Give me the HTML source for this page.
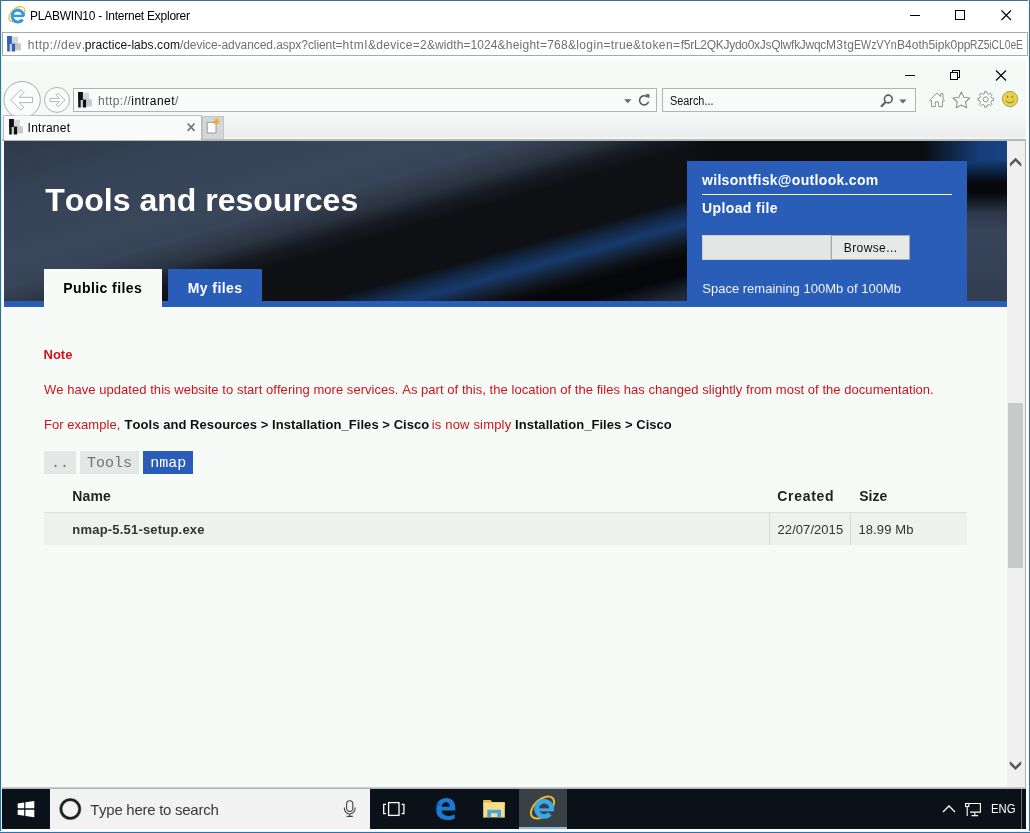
<!DOCTYPE html>
<html><head><meta charset="utf-8"><title>PLABWIN10 - Internet Explorer</title>
<style>
*{box-sizing:border-box;margin:0;padding:0}
html,body{width:1030px;height:833px;overflow:hidden;background:#fff}
body{position:relative;will-change:transform;font-kerning:none;font-family:"Liberation Sans",sans-serif;color:#000}
.abs{position:absolute}
svg{position:absolute;overflow:visible}
.ui{font-family:"Liberation Sans",sans-serif;font-size:12px;white-space:nowrap;line-height:15px}
/* outer window frame */
#bl{left:0;top:0;width:1px;height:833px;background:#2f7399}
#bl2{left:1px;top:0;width:1px;height:833px;background:#dcf1f8}
#bt{left:0;top:0;width:1030px;height:1px;background:#3d7394}
#br{left:1028px;top:0;width:2px;height:833px;background:linear-gradient(90deg,#e4f8fe 0,#e4f8fe 0.9px,#4a6d84 1.1px,#4a6d84 2px)}
#bb{left:0;top:831px;width:1030px;height:2px;background:linear-gradient(180deg,#e4f6fc 0,#e4f6fc 0.8px,#2d72a8 1px,#2d72a8 2px)}
#title{left:30px;top:9.1px;letter-spacing:-0.24px;color:#000}
#addr1{left:2px;top:32px;width:1025.6px;height:24px;border:1px solid #a6aaa8;background:#fff}
.u{top:37.7px;color:#707070}
/* remote desktop */
#ie{left:2px;top:60px;width:1024px;height:81px;background:linear-gradient(180deg,#fff 0,#f6faf7 1.5px)}
#navaddr{left:73px;top:88px;width:584px;height:24px;border:1px solid #b0b4b2;background:#f8fbf9}
#search{left:662px;top:88px;width:254px;height:24px;border:1px solid #b0b4b2;background:#f8fbf9}
#tabrow{left:2px;top:115px;width:1024px;height:26px;background:linear-gradient(180deg,#f5f8f6 0,#eaedeb 22px,#f6f8f7 23px,#f6f8f7 24px,#b4b8b6 24.5px,#b4b8b6 26px)}
#tab{left:2.5px;top:115px;width:199px;height:24.5px;background:#f8fbf9;border:1px solid #b9bdbb;border-bottom:none}
#newtab{left:201.5px;top:116px;width:22px;height:23px;background:#d4d7d5;border:1px solid #c3c6c4;border-bottom:none}
#page{left:4px;top:141px;width:1003px;height:647px;background:#f7fbf8;overflow:hidden}
#sb{left:1007px;top:141px;width:18px;height:647px;background:#f0f0f0}
#sbthumb{left:1008px;top:402.5px;width:15px;height:165px;background:#c6cac8}
#sbr{left:1024.8px;top:139.5px;width:1.2px;height:649px;background:#aeb1af}
#wb{left:2px;top:787.3px;width:1024px;height:1.8px;background:linear-gradient(180deg,#d0d3d1,#a9acaa)}
#taskbar{left:2px;top:789px;width:1024px;height:39.5px;background:#0a1118}

#banner{left:0;top:0;width:1003px;height:159.5px;background:linear-gradient(164.5deg,rgba(20,58,110,0) 56.5%,rgba(22,58,108,.6) 59.5%,rgba(22,58,108,1) 62.2%,rgba(24,48,84,.7) 64.5%,rgba(9,11,14,0) 67.5%,rgba(5,7,10,1) 69.5%,rgba(5,7,10,1) 73.5%,#1e2836 78%,#2a3446 83%,#323e52 100%),linear-gradient(164deg,#2f3a4b 0,#364256 14%,#3a465a 27%,#384457 33%,#2a3341 38.5%,#171b22 42%,#0e1013 45.5%,#0d0f12 100%)}
#bluebar{left:0;top:159.5px;width:1003px;height:6.2px;background:#2a5db8}
#bstrip{left:683px;top:0;width:320px;height:20px;background:linear-gradient(90deg,rgba(10,12,16,0) 0,#0a0c10 40px,#0a0c10 235px,#163f7a 295px,#164280 320px)}
#rstrip{left:962px;top:20px;width:41px;height:139.5px;background:linear-gradient(180deg,#133c74 0,#0c2344 10px,#06080b 22px,#06080b 32px,#2c3749 52px,#38445a 70px,#333e52 139px)}
#panel{left:683.3px;top:19.8px;width:279.4px;height:146px;background:#2a5db8;color:#fff}
.tabp{top:128px;height:38px;font-weight:bold;font-size:14px;line-height:14px;text-align:center;padding-top:11.5px;letter-spacing:0.42px}
#t1{left:39.5px;width:118.5px;background:#f7fbf8;color:#000}
#t2{left:164.2px;width:93.8px;height:31.5px;background:#2a5db8;color:#fff}
#h1{left:41.2px;top:42.6px;font-size:32px;line-height:32px;font-weight:bold;color:#fff;white-space:nowrap}
.red{color:#cd141b}
.p{left:40px;font-size:13px;line-height:13px;white-space:nowrap}
.p b{color:#111}
.bc{top:310px;height:23px;font-family:"Liberation Mono",monospace;font-size:15px;line-height:15px;padding:4.5px 7px 0;background:#e3e7e5;color:#747474;white-space:nowrap}
.th{top:348.4px;font-size:14px;line-height:14px;font-weight:bold;color:#222;white-space:nowrap}
#row{left:40px;top:371.2px;width:922.7px;height:32.8px;background:#eef2ee;border-top:1px solid #dde0de}
.td{top:381.7px;font-size:13px;line-height:13px;color:#333;white-space:nowrap}
.vl{top:372px;width:1px;height:32px;background:#d6d9d7}
</style></head><body>
<div id="ie" class="abs"></div>
<div id="bl" class="abs"></div><div id="bl2" class="abs"></div><div id="bt" class="abs"></div><div id="br" class="abs"></div><div id="bb" class="abs"></div>
<div id="title" class="abs ui">PLABWIN10 - Internet Explorer</div>
<div id="addr1" class="abs"></div>
<span class="abs ui u" style="left:27.8px;letter-spacing:0.462px">http://dev.</span><span class="abs ui u" style="left:84.7px;letter-spacing:0.075px;color:#111">practice-labs.com</span><span class="abs ui u" style="left:180px;letter-spacing:-0.07px">/device-advanced.aspx?client=</span><span class="abs ui u" style="left:342.4px;letter-spacing:0.707px">html</span><span class="abs ui u" style="left:367.9px;letter-spacing:0.303px">&amp;device=2</span><span class="abs ui u" style="left:427px;letter-spacing:0.07px">&amp;width=1024</span><span class="abs ui u" style="left:497.5px;letter-spacing:0.242px">&amp;height=768</span><span class="abs ui u" style="left:567.9px;letter-spacing:0.368px">&amp;login=true</span><span class="abs ui u" style="left:633px;letter-spacing:0.46px">&amp;token=</span><span class="abs ui u" style="left:680.8px;letter-spacing:-0.282px">f5rL2QKJydo0xJsQlwfkJwqc</span><span class="abs ui u" style="left:825.9px;letter-spacing:0.47px">M3tg</span><span class="abs ui u" style="left:854.3px;transform:scaleX(.889);transform-origin:0 0">EWzVYn</span><span class="abs ui u" style="left:897px;letter-spacing:0.008px">B4oth5ipk0pp</span><span class="abs ui u" style="left:969.9px;transform:scaleX(.853);transform-origin:0 0">RZ5iCL0eE</span>


<div id="tabrow" class="abs"></div>
<div id="navaddr" class="abs"></div>
<div id="search" class="abs"></div>
<div id="tab" class="abs"></div>
<div id="newtab" class="abs"></div>
<div id="page" class="abs">
<div id="banner" class="abs"></div>
<div id="bstrip" class="abs"></div><div id="rstrip" class="abs"></div>
<div id="bluebar" class="abs"></div>
<div id="h1" class="abs">Tools and resources</div>
<div id="t1" class="abs tabp">Public files</div>
<div id="t2" class="abs tabp">My files</div>
<div id="panel" class="abs">
 <div class="abs" style="left:14.7px;top:12.5px;font-size:14px;line-height:14px;font-weight:bold;letter-spacing:0.32px;white-space:nowrap">wilsontfisk@outlook.com</div>
 <div class="abs" style="left:15px;top:32.8px;width:249.5px;height:1px;background:#f2f5fb"></div>
 <div class="abs" style="left:14.7px;top:40.2px;font-size:14px;line-height:14px;font-weight:bold;letter-spacing:0.4px;white-space:nowrap">Upload file</div>
 <div class="abs" style="left:14.5px;top:74.3px;width:129.5px;height:25px;background:#e3e6e4;border:1px solid #cfd2d0"></div>
 <div class="abs" style="left:143.6px;top:74.3px;width:79.4px;height:25px;background:#e6e9e7;border:1px solid #a7aaa8;color:#111;font-size:12px;line-height:12px;padding-top:6.2px;text-align:center;letter-spacing:0.4px">Browse...</div>
 <div class="abs" style="left:15px;top:121.3px;font-size:13px;line-height:13px;color:#eef2fa;letter-spacing:0px;white-space:nowrap">Space remaining 100Mb of 100Mb</div>
</div>
<div class="abs p red" style="top:206.9px;left:39.5px;font-weight:bold">Note</div>
<div class="abs p red" style="top:242px;letter-spacing:0.043px">We have updated this website to start offering more services. As part of this, the location of the files has changed slightly from most of the documentation.</div>
<div class="abs p red" style="top:276.9px;left:39.9px;letter-spacing:0.05px">For example,</div>
<div class="abs p" style="top:276.9px;left:120.5px;font-weight:bold;color:#111;letter-spacing:0.06px">Tools and Resources &gt; Installation_Files &gt; Cisco</div>
<div class="abs p red" style="top:276.9px;left:427.8px;letter-spacing:0.17px">is now simply</div>
<div class="abs p" style="top:276.9px;left:511.1px;font-weight:bold;color:#111;letter-spacing:0.04px">Installation_Files &gt; Cisco</div>
<div class="abs bc" style="left:40px;width:32px">..</div>
<div class="abs bc" style="left:76px;width:59px">Tools</div>
<div class="abs bc" style="left:139.2px;width:50px;background:#2a5db8;color:#fff">nmap</div>
<div class="abs th" style="left:68.3px;letter-spacing:0.15px">Name</div>
<div class="abs th" style="left:773.3px;letter-spacing:0.7px">Created</div>
<div class="abs th" style="left:855.2px">Size</div>
<div id="row" class="abs"></div>
<div class="abs vl" style="left:765px"></div><div class="abs vl" style="left:846px"></div>
<div class="abs td" style="left:68.3px;font-weight:bold;letter-spacing:0.2px">nmap-5.51-setup.exe</div>
<div class="abs td" style="left:773.6px;letter-spacing:0.05px">22/07/2015</div>
<div class="abs td" style="left:854.4px;letter-spacing:0.12px">18.99 Mb</div>

</div>
<div id="sb" class="abs"></div><div id="sbthumb" class="abs"></div><div id="sbr" class="abs"></div>
<div id="wb" class="abs"></div>
<div id="taskbar" class="abs"></div>
<div class="abs ui" style="left:98px;top:93.6px;color:#6a6a6a;letter-spacing:0.46px">http://<span style="color:#000">intranet</span>/</div>
<div class="abs ui" style="left:670px;top:94.3px;color:#111;transform:scaleX(.905);transform-origin:0 0">Search...</div>
<div class="abs ui" style="left:27.6px;top:121px;letter-spacing:0.25px;color:#000">Intranet</div>
<!--ICONS-START-->
<svg width="1030" height="833" style="left:0;top:0" viewBox="0 0 1030 833">
<!-- outer title icon -->
<g transform="translate(9.8 7.2)" color="#2f9ae0"><ellipse cx="7.1" cy="7" rx="9.4" ry="5.7" transform="rotate(-42 7.1 7)" fill="none" stroke="#eec13a" stroke-width="1.3"/><circle cx="8" cy="8" r="5.6" fill="#fff"/><path d="M13.7 9 A5.7 5.9 0 1 0 12.7 12.2" fill="none" stroke="currentColor" stroke-width="3"/><rect x="3.5" y="7.5" width="10.5" height="2.4" fill="currentColor"/></g>
<!-- outer window controls -->
<g stroke="#000" stroke-width="1" fill="none" shape-rendering="crispEdges"><path d="M910 15.5h10"/><rect x="955.5" y="10.5" width="9" height="9"/></g>
<path d="M1001.5 10.5l9.5 9.5M1011 10.5l-9.5 9.5" stroke="#000" stroke-width="1.1" fill="none"/>
<g transform="translate(7 36)" color="#2f62b3"><rect x="4.9" y="0.7" width="6.1" height="6.9" fill="#d3d6d8"/><rect x="8.1" y="7.2" width="5.8" height="7.2" fill="#c5c7c8"/><rect x="2.7" y="8" width="2.2" height="7.5" fill="#cfd3d9"/><rect x="0.2" y="0" width="2.5" height="15.5" fill="currentColor"/><rect x="0.2" y="0" width="4.7" height="8" fill="currentColor"/><rect x="4.9" y="7.5" width="3.2" height="8" fill="currentColor"/></g>
<!-- inner window controls -->
<g stroke="#000" stroke-width="1" fill="none" shape-rendering="crispEdges"><path d="M905 75.5h10"/><rect x="950.5" y="72.5" width="7" height="7"/><path d="M952.5 72.5v-2h7v7h-2"/></g>
<path d="M996 70.5l10 10M1006 70.5l-10 10" stroke="#000" stroke-width="1.1" fill="none"/>
<!-- back / forward -->
<clipPath id="cpb"><rect x="0" y="60" width="60" height="55.5"/></clipPath><circle cx="22.1" cy="99.7" r="18.2" fill="#fafcfb" stroke="#a9acaa" stroke-width="1" clip-path="url(#cpb)"/>
<path d="M10.7 99.9L20.9 89.7L23.8 92.6L19.2 97.3H32.5V102.6H19.2L23.8 107.3L20.9 110.1Z" fill="#fdfefd" stroke="#b3b6b4" stroke-width="1" stroke-linejoin="miter"/>
<circle cx="57" cy="99.9" r="12.5" fill="#fafcfb" stroke="#b0b3b1" stroke-width="1"/>
<path d="M64.9 100L58 93.1L56 95.1L59.4 98.4H50V101.6H59.4L56 104.9L58 106.9Z" fill="#fdfefd" stroke="#b6b9b7" stroke-width="1"/>
<!-- nav address -->
<g transform="translate(78 92)" color="#111"><rect x="4.9" y="0.7" width="6.1" height="6.9" fill="#d3d6d8"/><rect x="8.1" y="7.2" width="5.8" height="7.2" fill="#c5c7c8"/><rect x="2.7" y="8" width="2.2" height="7.5" fill="#cfd3d9"/><rect x="0.2" y="0" width="2.5" height="15.5" fill="currentColor"/><rect x="0.2" y="0" width="4.7" height="8" fill="currentColor"/><rect x="4.9" y="7.5" width="3.2" height="8" fill="currentColor"/></g>
<path d="M624.2 99.2h7.2l-3.6 4z" fill="#666"/>
<path d="M647.6 97.2A4.6 4.6 0 1 0 648.6 101.6" fill="none" stroke="#555" stroke-width="1.5"/><path d="M645.2 94.2h4.2v4.4z" fill="#555"/>
<!-- search icons -->
<circle cx="888.3" cy="99" r="3.9" fill="none" stroke="#5c5f5d" stroke-width="1.6"/><path d="M885.4 102.2l-4.4 4.6" stroke="#5c5f5d" stroke-width="2.1" fill="none"/>
<path d="M899.2 99.6h7.4l-3.7 3.8z" fill="#666"/>
<!-- home -->
<path d="M929.6 100.3L937 92.9L940.7 96.6V93.7H943V98.9L944.4 100.3L943.4 101.4L942.4 100.4V106.6H938.7V101.8H935.3V106.6H931.6V100.4L930.6 101.4Z" fill="#fff" stroke="#8f9391" stroke-width="1" stroke-linejoin="round"/>
<!-- star -->
<path d="M961.4 92l2.5 5.3l5.9 .7l-4.3 4l1.1 5.8l-5.2-2.9l-5.2 2.9l1.1-5.8l-4.3-4l5.9-.7z" fill="#fff" stroke="#8f9391" stroke-width="1.1" stroke-linejoin="round"/>
<!-- gear -->
<path d="M991.4 98.0L993.5 98.3L993.5 100.5L991.4 100.8L990.7 102.5L992.0 104.2L990.5 105.7L988.8 104.4L987.1 105.1L986.8 107.2L984.6 107.2L984.3 105.1L982.6 104.4L980.9 105.7L979.4 104.2L980.7 102.5L980.0 100.8L977.9 100.5L977.9 98.3L980.0 98.0L980.7 96.3L979.4 94.6L980.9 93.1L982.6 94.4L984.3 93.7L984.6 91.6L986.8 91.6L987.1 93.7L988.8 94.4L990.5 93.1L992.0 94.6L990.7 96.3Z" fill="#fff" stroke="#8f9391" stroke-width="1" stroke-linejoin="round"/><circle cx="985.7" cy="99.4" r="2.6" fill="#f6faf7" stroke="#8f9391" stroke-width="1"/>
<!-- smiley -->
<circle cx="1010" cy="99" r="7.7" fill="#e8d24c" stroke="#a99a4a" stroke-width="0.9"/><ellipse cx="1007.6" cy="96.8" rx="0.7" ry="1.2" fill="#8a7a28"/><ellipse cx="1012.4" cy="96.8" rx="0.7" ry="1.2" fill="#8a7a28"/><path d="M1005.8 100.8Q1010 105 1014.2 100.8" fill="none" stroke="#8a7a28" stroke-width="1"/>
<!-- tab -->
<g transform="translate(9 119)" color="#111"><rect x="4.9" y="0.7" width="6.1" height="6.9" fill="#d3d6d8"/><rect x="8.1" y="7.2" width="5.8" height="7.2" fill="#c5c7c8"/><rect x="2.7" y="8" width="2.2" height="7.5" fill="#cfd3d9"/><rect x="0.2" y="0" width="2.5" height="15.5" fill="currentColor"/><rect x="0.2" y="0" width="4.7" height="8" fill="currentColor"/><rect x="4.9" y="7.5" width="3.2" height="8" fill="currentColor"/></g>
<path d="M187.7 123.5l6.8 7.4M194.5 123.5l-6.8 7.4" stroke="#777a78" stroke-width="1.8" fill="none"/>
<path d="M207.2 122.4h8.8v10.6h-8.8z" fill="#fdfdfd" stroke="#8f9290" stroke-width="0.9"/><path d="M216.6 118.3v6.4M213.4 121.5h6.4M214.3 119.2l4.6 4.6M218.9 119.2l-4.6 4.6" stroke="#f2aa2c" stroke-width="1.1"/>
<!-- scroll arrows -->
<path d="M1015.6 157.8L1021.2 163.3V166.8L1015.6 161.3L1009.9 166.8V163.3Z" fill="#585858"/>
<path d="M1015.5 769.9L1021.2 764.4V760.9L1015.5 766.4L1009.8 760.9V764.4Z" fill="#585858"/>
</svg>
<!--ICONS-END-->
<div class="abs" style="left:49.8px;top:789px;width:320px;height:39.5px;background:#f2f2f2"></div>
<div class="abs" style="left:90.2px;top:801.9px;font-size:15px;line-height:15px;color:#3a3a3a;letter-spacing:-0.27px;white-space:nowrap">Type here to search</div>
<div class="abs" style="left:519px;top:789px;width:48px;height:39.5px;background:#394046;border-bottom:2.2px solid #8fbbe3"></div>
<div class="abs" style="left:991.4px;top:802.5px;font-size:12px;line-height:12px;color:#fff;transform:scaleX(.94);transform-origin:0 0;white-space:nowrap">ENG</div>
<div class="abs" style="left:1021px;top:789px;width:1px;height:39.5px;background:#6a6f74"></div>
<svg width="1030" height="833" style="left:0;top:0" viewBox="0 0 1030 833">
<!-- windows logo -->
<path d="M17.7 803.4L24.2 802.4V808.3H17.7ZM25.4 802.2L34.3 801V808.3H25.4ZM17.7 809.7H24.2V815.8L17.7 814.8ZM25.4 809.7H34.3V817.2L25.4 815.9Z" fill="#fff"/>
<!-- cortana -->
<circle cx="70.3" cy="809" r="9.4" fill="none" stroke="#8a8a8a" stroke-width="3.4"/>
<circle cx="70.3" cy="809" r="9.4" fill="none" stroke="#1d1d1d" stroke-width="2.2"/>
<!-- mic -->
<rect x="346.6" y="800.8" width="6.2" height="10.6" rx="3.1" fill="none" stroke="#444" stroke-width="1.1"/><path d="M344.4 807.5v1.2a5.3 5.3 0 0 0 10.6 0v-1.2M349.7 814v2.3M346.6 816.4h6.2" fill="none" stroke="#444" stroke-width="1.1"/>
<!-- task view -->
<g fill="none" stroke="#fff" stroke-width="1.3"><rect x="388.6" y="802.6" width="10.4" height="12.8"/><path d="M386 804.3h-2.3v9.4h2.3M401.6 804.3h2.3v9.4h-2.3"/></g>
<!-- edge -->
<path d="M435.2 807.6C436 801 440.6 797 446 797C452 797 455.2 801.6 455 807.2V809.6H441.2C441.6 813.6 445 815 448.4 815C450.8 815 452.8 814.4 454.4 813.4V817.6C452.4 818.6 450 819.2 447 819.2C440.4 819.2 436 815.2 436 809.4C436 805.6 438.4 802.6 441.4 801.2C438.6 802 436.4 804.4 435.2 807.6ZM441.4 805.8H449.4C449.4 803.2 448 801.4 445.6 801.4C443.4 801.4 441.8 803.2 441.4 805.8Z" fill="#1b7bd4" transform="translate(0.3 0.9)"/>
<!-- explorer -->
<path d="M483.2 800h7.4l1.6 1.9h12.6v3H483.2z" fill="#e6b84e"/><rect x="483.2" y="802.6" width="21.6" height="14.8" fill="#f8de8c"/><path d="M487.3 817.4v-7.7h13.7v7.7h-3.7v-4.2h-6.3v4.2z" fill="#48a6dc"/><rect x="483.2" y="816.7" width="4.1" height="0.8" fill="#e0b44c"/><rect x="501" y="816.7" width="3.8" height="0.8" fill="#e0b44c"/>
<!-- ie -->
<g><ellipse cx="542.5" cy="807.5" rx="13.8" ry="8" transform="rotate(-42 542.5 807.5)" fill="none" stroke="#e6b930" stroke-width="2"/><circle cx="544" cy="809" r="7.6" fill="#394046"/><path d="M551.7 810.3A7.6 7.6 0 1 0 549.9 813.9" fill="none" stroke="#36a9e6" stroke-width="4.6"/><rect x="538.4" y="808.3" width="15.6" height="3.1" fill="#36a9e6"/></g>
<!-- tray -->
<path d="M943 812l6-6l6 6" fill="none" stroke="#fff" stroke-width="1.3"/>
<g fill="none" stroke="#fff" stroke-width="1.1"><path d="M968.6 803.5h11.8v8.6h-10.4"/><path d="M971.6 815.6h6.4M974.8 812.2v3.4"/><rect x="965.6" y="803.5" width="3.2" height="3"/><path d="M967.2 806.5v9.6"/></g>
</svg>

</body></html>
